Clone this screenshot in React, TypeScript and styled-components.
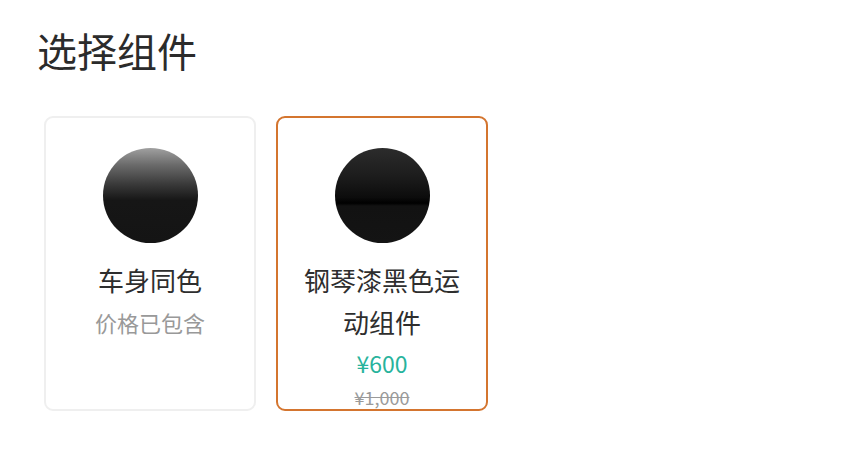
import React from "react";
import styled, { createGlobalStyle } from "styled-components";

const GlobalStyle = createGlobalStyle`
  html, body {
    margin: 0;
    padding: 0;
    background: #ffffff;
    font-family: "Noto Sans CJK SC", "Noto Sans", sans-serif;
  }
`;

const Page = styled.div`
  width: 852px;
  height: 456px;
  padding: 22px 0 0 37px;
  box-sizing: border-box;
`;

const Title = styled.h1`
  margin: 0;
  font-size: 40px;
  font-weight: 400;
  line-height: 56px;
  color: #2b2b2b;
`;

const CardRow = styled.div`
  display: flex;
  gap: 20px;
  margin: 38px 0 0 7px;
`;

const Card = styled.div<{ $selected?: boolean }>`
  width: 212px;
  height: 295px;
  box-sizing: border-box;
  border: ${(p) => (p.$selected ? "2px solid #d4752f" : "2px solid #efefef")};
  border-radius: 9px;
  padding: 30px 20px 0;
  display: flex;
  flex-direction: column;
  align-items: center;
  overflow: hidden;
`;

const Swatch = styled.div<{ $gloss?: boolean }>`
  width: 95px;
  height: 95px;
  border-radius: 50%;
  flex-shrink: 0;
  background: ${(p) =>
    p.$gloss
      ? "linear-gradient(180deg, #2c2c2c 0%, #1c1c1c 30%, #0c0c0c 52%, #000 58%, #121212 61%, #141414 100%)"
      : "linear-gradient(180deg, #a0a0a0 0%, #6a6a6a 18%, #3a3a3a 38%, #161616 55%, #141414 100%)"};
`;

const Name = styled.div`
  margin-top: 16px;
  font-size: 26px;
  line-height: 42px;
  color: #2e2e2e;
  text-align: center;
`;

const Included = styled.div`
  font-size: 22px;
  line-height: 42px;
  color: #999999;
`;

const Price = styled.div`
  font-size: 23px;
  line-height: 40px;
  color: #27b39c;
`;

const OldPrice = styled.div`
  margin-top: 2px;
  font-size: 18px;
  line-height: 24px;
  color: #9a9a9a;
  text-decoration: line-through;
`;

export default function App() {
  return (
    <Page>
      <GlobalStyle />
      <Title>选择组件</Title>
      <CardRow>
        <Card>
          <Swatch />
          <Name>车身同色</Name>
          <Included>价格已包含</Included>
        </Card>
        <Card $selected>
          <Swatch $gloss />
          <Name>钢琴漆黑色运动组件</Name>
          <Price>¥600</Price>
          <OldPrice>¥1,000</OldPrice>
        </Card>
      </CardRow>
    </Page>
  );
}
